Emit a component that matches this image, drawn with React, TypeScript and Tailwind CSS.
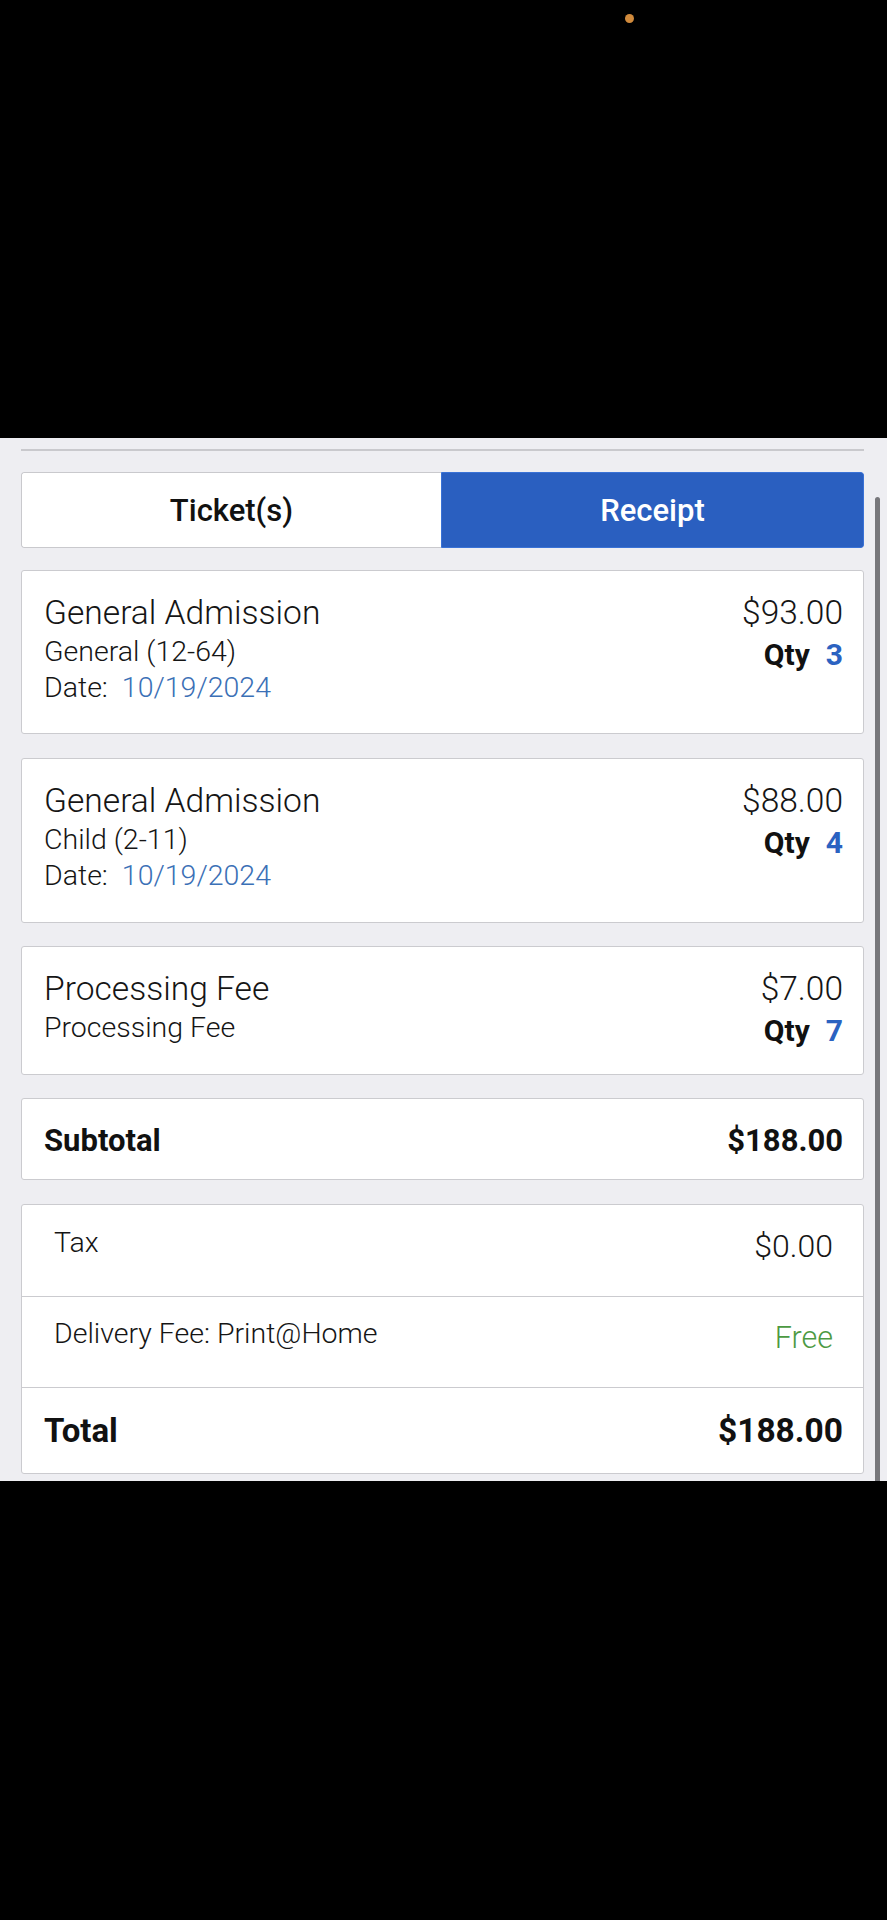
import React from "react";

const font = { fontFamily: "Roboto, 'Noto Sans', Arial, sans-serif" };

function ItemCard({
  title,
  sub,
  date,
  price,
  qty,
  h,
}: {
  title: string;
  sub: string;
  date?: string;
  price: string;
  qty: string;
  h: string;
}) {
  return (
    <div
      className={`bg-white border border-[#cbcbcf] rounded-[3px] pt-[22px] pl-[22px] pr-[20px] flex justify-between items-start ${h}`}
    >
      <div className="flex flex-col text-[#151515] font-light">
        <div className="text-[33.6px] leading-[40px]">{title}</div>
        <div className="text-[28.5px] leading-[38px]">{sub}</div>
        {date && (
          <div className="text-[28.5px] leading-[33px]">
            Date:<span className="ml-[14px] text-[#3b70b6]">{date}</span>
          </div>
        )}
      </div>
      <div className="flex flex-col items-end">
        <div className="text-[33.5px] leading-[40px] font-light text-[#151515]">{price}</div>
        <div className="text-[30px] leading-[43px] font-bold text-[#111]">
          Qty<span className="ml-[16px] text-[#2b62c1]">{qty}</span>
        </div>
      </div>
    </div>
  );
}

export default function App() {
  return (
    <div className="w-[887px] min-h-[1920px] bg-black flex flex-col" style={font}>
      <div className="h-[438px] relative">
        <div className="absolute left-[625px] top-[14px] w-[9px] h-[9px] rounded-full bg-[#d08a3c]" />
      </div>
      <div className="relative bg-[#eeeef2] h-[1043px] pt-[11px] pl-[21px] pr-[23px]">
        <div className="h-[2px] bg-[#c9c9cd]" />
        <div className="mt-[21px] h-[76px] flex rounded-[3px] overflow-hidden">
          <div className="flex-1 bg-white border border-[#c9c9cd] border-r-0 rounded-l-[3px] flex items-center justify-center pt-[3px]">
            <span className="text-[31px] font-medium text-[#111]">Ticket(s)</span>
          </div>
          <div className="w-[423px] bg-[#2a5fc0] border border-[#3a72d6] rounded-r-[3px] flex items-center justify-center pt-[3px]">
            <span className="text-[31px] font-medium text-white">Receipt</span>
          </div>
        </div>

        <div className="mt-[22px]">
          <ItemCard
            title="General Admission"
            sub="General (12-64)"
            date="10/19/2024"
            price="$93.00"
            qty="3"
            h="h-[164px]"
          />
        </div>
        <div className="mt-[24px]">
          <ItemCard
            title="General Admission"
            sub="Child (2-11)"
            date="10/19/2024"
            price="$88.00"
            qty="4"
            h="h-[165px]"
          />
        </div>
        <div className="mt-[23px]">
          <ItemCard
            title="Processing Fee"
            sub="Processing Fee"
            price="$7.00"
            qty="7"
            h="h-[129px]"
          />
        </div>

        <div className="mt-[23px] h-[82px] bg-white border border-[#cbcbcf] rounded-[3px] pt-[24px] pl-[22px] pr-[20px] flex justify-between items-start">
          <span className="text-[31px] leading-[36px] font-bold text-[#111]">Subtotal</span>
          <span className="text-[31px] leading-[36px] font-bold text-[#111]">$188.00</span>
        </div>

        <div className="mt-[24px] bg-white border border-[#cbcbcf] rounded-[3px] flex flex-col">
          <div className="h-[92px] border-b border-[#cbcbcf] pl-[32px] pr-[30px] pt-[20px] flex justify-between items-start">
            <span className="text-[28.5px] leading-[36px] font-light text-[#151515]">Tax</span>
            <span className="mt-[3px] text-[32px] leading-[36px] font-light text-[#151515]">$0.00</span>
          </div>
          <div className="h-[91px] border-b border-[#cbcbcf] pl-[32px] pr-[30px] pt-[19px] flex justify-between items-start">
            <span className="text-[28.5px] leading-[36px] font-light text-[#151515]">Delivery Fee: Print@Home</span>
            <span className="mt-[4px] text-[30.5px] leading-[36px] font-light text-[#4c9a42]">Free</span>
          </div>
          <div className="h-[85px] pl-[22px] pr-[20px] pt-[23px] flex justify-between items-start">
            <span className="text-[33px] leading-[40px] font-bold text-[#111]">Total</span>
            <span className="text-[33.5px] leading-[40px] font-bold text-[#111]">$188.00</span>
          </div>
        </div>

        <div className="absolute right-[7px] top-[59px] bottom-0 w-[5px] rounded-t-full bg-[#77777b]" />
      </div>
      <div className="flex-1 bg-black" />
    </div>
  );
}
